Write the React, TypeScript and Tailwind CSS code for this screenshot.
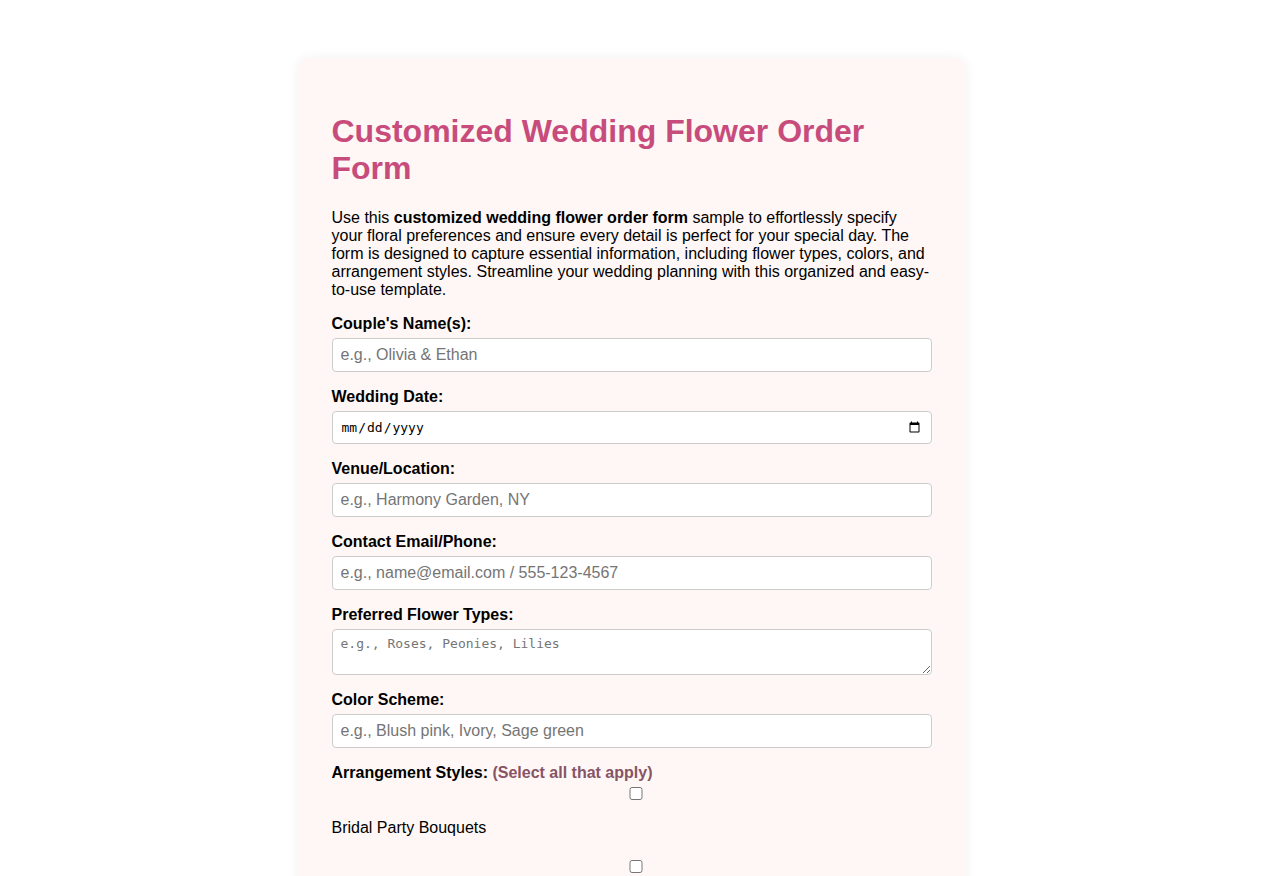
import React from "react";

// Fields shown in the order form
const textFields = [
  { id: "names", label: "Couple's Name(s):", placeholder: "e.g., Olivia & Ethan", type: "text" },
  { id: "date", label: "Wedding Date:", placeholder: "", type: "date" },
  { id: "venue", label: "Venue/Location:", placeholder: "e.g., Harmony Garden, NY", type: "text" },
  { id: "contact", label: "Contact Email/Phone:", placeholder: "e.g., name@email.com / 555-123-4567", type: "text" },
  { id: "flowers", label: "Preferred Flower Types:", placeholder: "e.g., Roses, Peonies, Lilies", type: "textarea" },
  { id: "colors", label: "Color Scheme:", placeholder: "e.g., Blush pink, Ivory, Sage green", type: "text" },
];

const arrangementStyles = [
  "Bridal Party Bouquets",
  "Boutonnieres & Corsages",
  "Ceremony Arch Flowers",
  "Table Centerpieces",
  "Aisle Decorations",
];

const inputClass =
  "block w-full h-[34px] px-2 bg-white border border-[#ccc] rounded text-[16px] text-black placeholder:text-[#757575] font-['Liberation_Sans',Arial,sans-serif]";

export default function App() {
  return (
    <div className="min-h-screen bg-white pt-[58px] pb-10 font-['Liberation_Sans',Arial,sans-serif] text-black">
      <div className="mx-auto w-[668px] bg-[#fff7f5] rounded-xl shadow-[0_0_12px_rgba(0,0,0,0.06)] px-[34px] pt-[55px] pb-8">
        <h1 className="text-[32px] leading-[37px] font-bold text-[#c74c7c] mb-[22px]">
          Customized Wedding Flower Order Form
        </h1>
        <p className="text-[16px] leading-[18px] mb-[15px]">
          Use this <strong>customized wedding flower order form</strong> sample to effortlessly specify
          your floral preferences and ensure every detail is perfect for your special day. The form is
          designed to capture essential information, including flower types, colors, and arrangement
          styles. Streamline your wedding planning with this organized and easy-to-use template.
        </p>

        <form onSubmit={(e) => e.preventDefault()}>
          {textFields.map((field) => (
            <div key={field.id} className="mb-[15px]">
              <label htmlFor={field.id} className="block font-bold text-[16px] leading-[18px] pt-[1px] mb-[5px]">
                {field.label}
              </label>
              {field.type === "textarea" ? (
                <textarea
                  id={field.id}
                  placeholder={field.placeholder}
                  className="block w-full h-[46px] px-2 py-[6px] bg-white border border-[#ccc] rounded text-[13px] leading-[16px] placeholder:text-[#757575] font-['DejaVu_Sans_Mono',monospace]"
                />
              ) : field.type === "date" ? (
                <input
                  id={field.id}
                  type="date"
                  className="block w-full h-[33px] px-2 bg-white border border-[#ccc] rounded text-[13px] font-['DejaVu_Sans_Mono',monospace]"
                />
              ) : (
                <input id={field.id} type="text" placeholder={field.placeholder} className={inputClass} />
              )}
            </div>
          ))}

          <div>
            <span className="block font-bold text-[16px] leading-[18px] pt-[1px]">
              Arrangement Styles: <span className="text-[#875466]">(Select all that apply)</span>
            </span>
            {arrangementStyles.map((style) => (
              <label key={style} className="block pt-[5px] mb-[18px]">
                <input type="checkbox" className="block w-full h-[13px] ml-[4px]" />
                <span className="block mt-[19px] text-[16px] leading-[18px]">{style}</span>
              </label>
            ))}
          </div>
        </form>
      </div>
    </div>
  );
}
